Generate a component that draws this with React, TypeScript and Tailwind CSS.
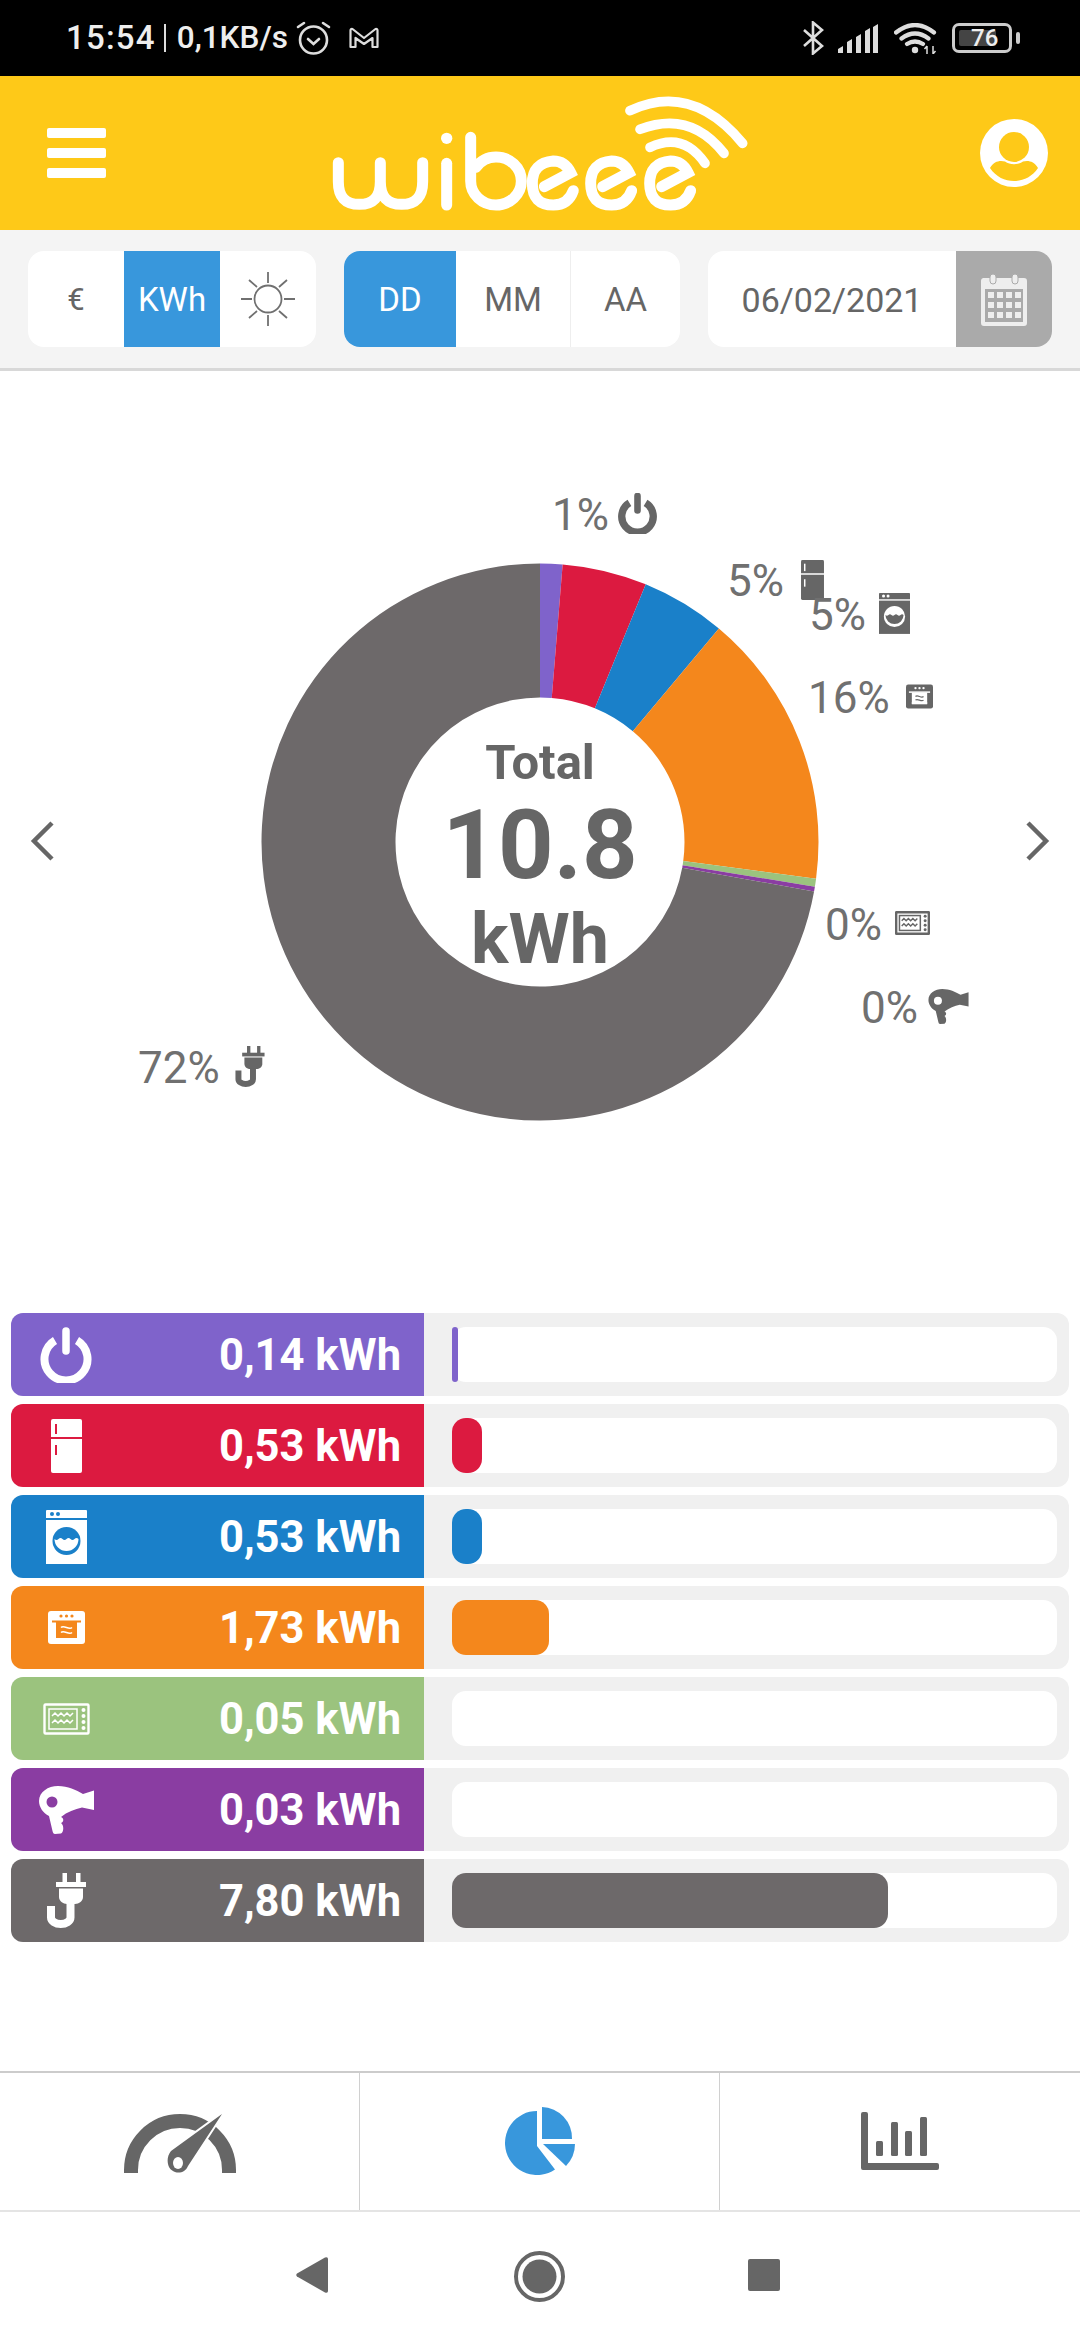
import type { FC } from "react";

type IconProps = { fg: string; bg: string; className?: string; thick?: boolean };

const PowerIcon: FC<IconProps> = ({ fg, className, thick }) => (
  <svg viewBox="0 0 52 56" className={className} fill="none" stroke={fg} strokeWidth={thick ? 10 : 8}>
    <path d="M15 13.5a21.5 21.5 0 1 0 22 0" strokeLinecap="butt" />
    <path d="M26 4v20" strokeWidth={thick ? 9 : 7.5} strokeLinecap="round" />
  </svg>
);

const FridgeIcon: FC<IconProps> = ({ fg, bg, className }) => (
  <svg viewBox="0 0 31 54" className={className}>
    <path d="M2 0h27a2 2 0 0 1 2 2v16H0V2a2 2 0 0 1 2-2z" fill={fg} />
    <path d="M0 20h31v32a2 2 0 0 1-2 2H2a2 2 0 0 1-2-2z" fill={fg} />
    <rect x="4" y="5" width="2" height="10" fill={bg} />
    <rect x="4" y="26" width="2" height="10" fill={bg} />
  </svg>
);

const WasherIcon: FC<IconProps> = ({ fg, bg, className }) => (
  <svg viewBox="0 0 41 54" className={className}>
    <path d="M1 0h39a1 1 0 0 1 1 1v7H0V1a1 1 0 0 1 1-1z" fill={fg} />
    <circle cx="6" cy="4" r="2" fill={bg} />
    <circle cx="12" cy="4" r="2" fill={bg} />
    <rect y="10" width="41" height="44" fill={fg} />
    <circle cx="20.5" cy="31" r="14" fill={bg} />
    <path d="M8.5 29q2 2 4 0t4 0t4 0t4 0t4 0t4 0a12 12 0 0 1-24 0z" fill={fg} />
  </svg>
);

const OvenIcon: FC<IconProps> = ({ fg, bg, className }) => (
  <svg viewBox="0 0 37 33" className={className}>
    <rect width="37" height="33" rx="3" fill={fg} />
    <circle cx="13" cy="5" r="1.6" fill={bg} />
    <circle cx="18.5" cy="5" r="1.6" fill={bg} />
    <circle cx="24" cy="5" r="1.6" fill={bg} />
    <rect x="4" y="9.5" width="29" height="2" fill={bg} />
    <rect x="8" y="11" width="21" height="16" fill={bg} />
    <path d="M13 16.5q1.5-1.5 5.5 0t5.5 0M13 21.5q1.5-1.5 5.5 0t5.5 0" fill="none" stroke={fg} strokeWidth="1.6" />
    <rect x="8" y="24" width="21" height="3" fill={bg} />
  </svg>
);

const MicrowaveIcon: FC<IconProps> = ({ fg, className, thick }) => (
  <svg viewBox="0 0 47 32" className={className} fill="none" stroke={fg}>
    <rect x="1.5" y="1.5" width="44" height="29" rx="1" strokeWidth={thick ? 3.4 : 2.4} />
    <rect x="6" y="6" width="28" height="20" strokeWidth={thick ? 2 : 1.5} />
    <path d="M9 13l3-3 3 3 3-3 3 3 3-3 3 3 3-3 M9 20l3-3 3 3 3-3 3 3 3-3 3 3 3-3" strokeWidth={thick ? 2 : 1.5} />
    <g fill={fg} stroke="none">
      <circle cx="40.5" cy="7" r="2" />
      <circle cx="40.5" cy="13" r="2" />
      <circle cx="40.5" cy="19" r="2" />
      <circle cx="40.5" cy="25" r="2" />
    </g>
  </svg>
);

const DryerIcon: FC<IconProps> = ({ fg, bg, className }) => (
  <svg viewBox="0 0 55 48" className={className}>
    <path
      d="M19 0C29 0 37 4 44 8L55 4.5V24L43 21.5C36 23 28 26 22 31C25 32 25 36 22 37C25 39 25 46 22 47.5L16 48C14.5 48 14 47 13.5 45L10 30C4 27 0 21 0 15C0 6 9 0 19 0Z"
      fill={fg}
    />
    <circle cx="13" cy="16" r="5.5" fill={bg} />
  </svg>
);

const PlugIcon: FC<IconProps> = ({ fg, className }) => (
  <svg viewBox="0 0 39 55" className={className}>
    <rect x="15.5" width="4.5" height="10" fill={fg} />
    <rect x="29" width="4.5" height="10" fill={fg} />
    <rect x="9" y="9" width="30" height="5" fill={fg} />
    <path d="M12 15.5H36V24C36 28 32 31 28 31H20C16 31 12 28 12 24Z" fill={fg} />
    <path d="M23.5 30V44.5a9.75 6.5 0 0 1-19.5 0V33" fill="none" stroke={fg} strokeWidth="8" />
  </svg>
);

const GREY = "#666666";
const WHITE = "#ffffff";

const segments = [
  { value: 0.14, color: "#7f63cb" },
  { value: 0.53, color: "#dc1a40" },
  { value: 0.53, color: "#1a80c9" },
  { value: 1.73, color: "#f4871c" },
  { value: 0.05, color: "#9bc37e" },
  { value: 0.03, color: "#8a3da2" },
  { value: 7.8, color: "#6d696a" },
];

function Donut() {
  const total = segments.reduce((sum, s) => sum + s.value, 0);
  const cx = 279;
  const cy = 279;
  const R = 278.5;
  const r = 144.5;
  let acc = 0;
  const point = (a: number, rad: number) =>
    `${cx + rad * Math.sin(a)} ${cy - rad * Math.cos(a)}`;

  return (
    <svg viewBox="0 0 558 558" className="block w-full h-full">
      {segments.map((s) => {
        const start = (acc / total) * Math.PI * 2;
        acc += s.value;
        const end = (acc / total) * Math.PI * 2;
        const large = end - start > Math.PI ? 1 : 0;
        const d = `M${point(start, R)}A${R} ${R} 0 ${large} 1 ${point(end, R)}L${point(end, r)}A${r} ${r} 0 ${large} 0 ${point(start, r)}Z`;
        return <path key={s.color} d={d} fill={s.color} />;
      })}
    </svg>
  );
}

const chartLabels = [
  { text: "1%", pos: "left-[552px] top-[118px]", Icon: PowerIcon, icon: "left-[618px] top-[122px] w-[39px] h-[41px]" },
  { text: "5%", pos: "left-[727px] top-[184px]", Icon: FridgeIcon, icon: "left-[801px] top-[189px] w-[23px] h-[40px]" },
  { text: "5%", pos: "left-[809px] top-[218px]", Icon: WasherIcon, icon: "left-[879px] top-[222px] w-[31px] h-[41px]" },
  { text: "16%", pos: "left-[808px] top-[301px]", Icon: OvenIcon, icon: "left-[906px] top-[313px] w-[27px] h-[25px]" },
  { text: "0%", pos: "left-[825px] top-[528px]", Icon: MicrowaveIcon, icon: "left-[895px] top-[540px] w-[35px] h-[24px]" },
  { text: "0%", pos: "left-[861px] top-[611px]", Icon: DryerIcon, icon: "left-[928px] top-[618px] w-[41px] h-[35px]" },
  { text: "72%", pos: "left-[138px] top-[671px]", Icon: PlugIcon, icon: "left-[235px] top-[675px] w-[30px] h-[41px]" },
];

const rows = [
  { kwh: "0,14 kWh", bg: "#7f63cb", panel: "bg-[#7f63cb]", bar: "w-[6px]", Icon: PowerIcon, icon: "w-[52px] h-[56px]" },
  { kwh: "0,53 kWh", bg: "#dc1a40", panel: "bg-[#dc1a40]", bar: "w-[30px]", Icon: FridgeIcon, icon: "w-[31px] h-[54px]" },
  { kwh: "0,53 kWh", bg: "#1a80c9", panel: "bg-[#1a80c9]", bar: "w-[30px]", Icon: WasherIcon, icon: "w-[41px] h-[54px]" },
  { kwh: "1,73 kWh", bg: "#f4871c", panel: "bg-[#f4871c]", bar: "w-[97px]", Icon: OvenIcon, icon: "w-[37px] h-[33px]" },
  { kwh: "0,05 kWh", bg: "#9bc37e", panel: "bg-[#9bc37e]", bar: "w-0", Icon: MicrowaveIcon, icon: "w-[47px] h-[32px]" },
  { kwh: "0,03 kWh", bg: "#8a3da2", panel: "bg-[#8a3da2]", bar: "w-0", Icon: DryerIcon, icon: "w-[55px] h-[48px]" },
  { kwh: "7,80 kWh", bg: "#6d696a", panel: "bg-[#6d696a]", bar: "w-[436px]", Icon: PlugIcon, icon: "w-[39px] h-[55px]" },
];

function StatusBar() {
  return (
    <div className="h-[76px] bg-black flex items-center pl-[66px] pr-[60px] text-[#eeeeee] shrink-0">
      <span className="text-[33px] font-medium tracking-[1.2px]">15:54</span>
      <div className="w-[2px] h-[28px] bg-[#dddddd] ml-[8px] mr-[11px]" />
      <span className="text-[31.5px] font-medium">0,1KB/s</span>
      <svg viewBox="0 0 35 34" className="w-[35px] h-[34px] ml-[8px]" fill="none" stroke="#dddddd" strokeWidth="2.6">
        <circle cx="17.5" cy="19" r="13.5" />
        <path d="M12 18l5.5 5 5.500-5M2 6l6-4M33 6l-6-4" strokeLinecap="round" />
      </svg>
      <svg viewBox="0 0 30 22" className="w-[30px] h-[22px] ml-[18px]" fill="none" stroke="#dddddd" strokeWidth="2.2">
        <path d="M1.5 20V3.5q0-2 2-1.5L15 11 26.5 2q2-.5 2 1.5V20h-5V11L15 17 6.5 11V20z" strokeLinejoin="round" />
      </svg>
      <div className="ml-auto flex items-center">
        <svg viewBox="0 0 22 34" className="w-[22px] h-[34px]" fill="none" stroke="#dddddd" strokeWidth="2.6">
          <path d="M2 9l18 16-9 7.5V1.5l9 7.5L2 25" />
        </svg>
        <svg viewBox="0 0 40 29" className="w-[40px] h-[29px] ml-[14px]" fill="#dddddd">
          <path d="M0 29v-4l5-3v7zM9 29V18l5-3v14zM18 29V13l5-3v19zM27 29V7l5-3v25zM35 29V3l5-3v29z" />
        </svg>
        <svg viewBox="0 0 46 31" className="w-[46px] h-[31px] ml-[16px] mr-[-2px]" fill="none" stroke="#dddddd">
          <path d="M2 9.5q19-15 38 0M7.5 15.5q13.5-10 27 0M13 21q8-5 16 0" strokeWidth="4.2" strokeLinecap="round" />
          <circle cx="21" cy="27" r="3.2" fill="#dddddd" stroke="none" />
          <path d="M33 23v8M33 23l-2.5 3M39 23v8M39 31l2.5-3" strokeWidth="1.5" />
        </svg>
        <div className="relative w-[60px] h-[30px] ml-[14px] rounded-[7px] border-[3px] border-[#cccccc] flex items-center">
          <div className="absolute left-[4px] top-[4px] bottom-[4px] w-[37px] bg-[#444444] rounded-[2px]" />
          <span className="relative ml-[16px] text-[24px] leading-none font-medium text-[#eeeeee]">76</span>
        </div>
        <div className="w-[4px] h-[12px] bg-[#cccccc] rounded-[2px] ml-[4px]" />
      </div>
    </div>
  );
}

function Header() {
  return (
    <header className="h-[154px] bg-[#fec918] flex items-center justify-between pl-[47px] pr-[32px] shrink-0 relative">
      <div className="flex flex-col gap-[10px]">
        <div className="w-[59px] h-[10px] bg-white rounded-[2px]" />
        <div className="w-[59px] h-[10px] bg-white rounded-[2px]" />
        <div className="w-[59px] h-[10px] bg-white rounded-[2px]" />
      </div>
      <svg
        viewBox="0 0 1440 450"
        className="absolute left-[300px] top-[4px] w-[480px] h-[150px]"
        fill="none"
        stroke="white"
        strokeWidth="33"
        strokeLinecap="round"
      >
        <path d="M115 248V305Q115 373 178 373Q241 373 241 305V248M241 305Q241 373 305 373Q368 373 368 305V248" />
        <circle cx="440" cy="175" r="17" fill="white" stroke="none" />
        <path d="M440 250V375" />
        <path d="M512 172V303A76 72 0 1 0 588 231Q550 231 528 262" />
        <path d="M733 320L812 278Q795 243 760 243Q697 248 697 310Q697 375 760 375Q805 375 820 332" />
        <path d="M908 320L987 278Q970 243 935 243Q872 248 872 310Q872 375 935 375Q980 375 995 332" />
        <path d="M1085 320L1164 278Q1147 243 1112 243Q1049 248 1049 310Q1049 375 1112 375Q1157 375 1172 332" />
        <path d="M990 92Q1175 5 1328 190" strokeWidth="29" />
        <path d="M1020 148Q1170 90 1272 220" strokeWidth="29" />
        <path d="M1050 202Q1150 155 1215 250" strokeWidth="29" />
      </svg>
      <svg viewBox="0 0 68 68" className="w-[68px] h-[68px]">
        <circle cx="34" cy="34" r="34" fill="white" />
        <circle cx="34" cy="28" r="15" fill="#fec918" />
        <path d="M10 49C14 42 20 41 25 42.5C30 46 38 46 43 42.5C48 41 54 42 58 49C52 58 43 62 34 62C25 62 16 58 10 49Z" fill="#fec918" />
      </svg>
    </header>
  );
}

function Toolbar() {
  return (
    <div className="h-[141px] bg-[#f4f4f4] border-b-[3px] border-[#d8d8d8] flex items-center justify-between px-[28px] pb-[1px] shrink-0 text-[#666666] text-[33px]">
      <div className="w-[288px] h-[96px] bg-white rounded-[16px] overflow-hidden flex">
        <div className="w-[96px] flex items-center justify-center pt-[3px] text-[31px]">€</div>
        <div className="w-[96px] bg-[#3897dc] text-white flex items-center justify-center pt-[3px]">KWh</div>
        <div className="w-[96px] flex items-center justify-center">
          <svg viewBox="0 0 56 56" className="w-[56px] h-[56px]" fill="none" stroke="#707070" strokeWidth="1.8">
            <circle cx="28" cy="28" r="13.5" />
            <path d="M28 1v11M28 44v11M1 28h11M44 28h11M9 9l8 7M47 9l-8 7M9 47l8-7M47 47l-8-7" />
          </svg>
        </div>
      </div>
      <div className="w-[336px] h-[96px] bg-white rounded-[16px] overflow-hidden flex">
        <div className="w-[112px] bg-[#3897dc] text-white flex items-center justify-center pt-[3px]">DD</div>
        <div className="w-[114px] flex items-center justify-center pt-[3px]">MM</div>
        <div className="w-[110px] border-l border-[#eeeeee] flex items-center justify-center pt-[3px]">AA</div>
      </div>
      <div className="w-[344px] h-[96px] bg-white rounded-[16px] overflow-hidden flex">
        <div className="w-[248px] flex items-center justify-center text-[34px] pt-[3px]">06/02/2021</div>
        <div className="w-[96px] bg-[#aaaaaa] flex items-center justify-center">
          <svg viewBox="0 0 48 54" className="w-[48px] h-[54px]">
            <path d="M3 6h41a3 3 0 0 1 3 3v42a3 3 0 0 1-3 3H4a3 3 0 0 1-3-3V9a3 3 0 0 1 2-3z" fill="#eeeeee" />
            <rect x="5" y="17" width="38" height="33" fill="#aaaaaa" />
            <rect x="10" y="2" width="6" height="10" rx="3" fill="#eeeeee" stroke="#aaaaaa" />
            <rect x="32" y="2" width="6" height="10" rx="3" fill="#eeeeee" stroke="#aaaaaa" />
            <g fill="#eeeeee">
              <rect x="8" y="20" width="6" height="6" /><rect x="17" y="20" width="6" height="6" /><rect x="26" y="20" width="6" height="6" /><rect x="35" y="20" width="6" height="6" />
              <rect x="8" y="30" width="6" height="6" /><rect x="17" y="30" width="6" height="6" /><rect x="26" y="30" width="6" height="6" /><rect x="35" y="30" width="6" height="6" />
              <rect x="8" y="40" width="6" height="6" /><rect x="17" y="40" width="6" height="6" /><rect x="26" y="40" width="6" height="6" /><rect x="35" y="40" width="6" height="6" />
            </g>
          </svg>
        </div>
      </div>
    </div>
  );
}

function Chart() {
  return (
    <section className="relative h-[942px] shrink-0 text-[#666666]">
      <div className="absolute left-[261px] top-[192px] w-[558px] h-[558px]">
        <Donut />
      </div>
      <div className="absolute left-[261px] top-[192px] w-[558px] h-[558px] flex flex-col items-center justify-center pt-[30px] font-bold">
        <span className="text-[49px] leading-[60px]">Total</span>
        <span className="text-[97px] leading-[104px]">10.8</span>
        <span className="text-[70px] leading-[84px]">kWh</span>
      </div>
      <svg viewBox="0 0 24 40" className="absolute left-[30px] top-[450px] w-[24px] h-[40px]" fill="none" stroke="#666666" strokeWidth="4.5">
        <path d="M22 2L4 20l18 18" />
      </svg>
      <svg viewBox="0 0 24 40" className="absolute left-[1026px] top-[450px] w-[24px] h-[40px]" fill="none" stroke="#666666" strokeWidth="4.5">
        <path d="M2 2l18 18L2 38" />
      </svg>
      {chartLabels.map((l, i) => (
        <div key={i}>
          <l.Icon fg={GREY} bg={WHITE} thick className={`absolute ${l.icon}`} />
          <span className={`absolute ${l.pos} text-[44px] leading-[52px] font-normal text-[#707070]`}>{l.text}</span>
        </div>
      ))}
    </section>
  );
}

function Rows() {
  return (
    <section className="flex flex-col gap-[8px] pl-[11px] pr-[11px] shrink-0">
      {rows.map((r, i) => (
        <div key={i} className="flex h-[83px] rounded-l-[12px] rounded-r-[12px] overflow-hidden bg-[#f0f0f0]">
          <div className={`w-[413px] ${r.panel} flex items-center pr-[23px]`}>
            <div className="w-[110px] flex justify-center">
              <r.Icon fg={WHITE} bg={r.bg} className={r.icon} />
            </div>
            <span className="ml-auto pt-[2px] text-[43.5px] font-bold text-white">{r.kwh}</span>
          </div>
          <div className="flex-1 pl-[28px] pr-[12px] py-[14px]">
            <div className="h-[55px] bg-white rounded-[14px]">
              <div className={`h-full ${r.bar} ${r.panel} rounded-[14px]`} />
            </div>
          </div>
        </div>
      ))}
    </section>
  );
}

function BottomNav() {
  return (
    <nav className="h-[141px] border-t-[2px] border-b-[2px] border-t-[#cccccc] border-b-[#e4e4e4] grid grid-cols-3 shrink-0">
      <div className="border-r border-[#d0d0d0] flex items-center justify-center pt-[4px]">
        <svg viewBox="0 0 112 59" className="w-[112px] h-[59px]">
          <path d="M7 59V56a49 49 0 0 1 98 0v3" fill="none" stroke="#666666" strokeWidth="14" />
          <path d="M98 0L64 52C60 62 46 60 44 50C43 45 44 41 47 37Z" fill="#666666" stroke="white" strokeWidth="4" paintOrder="stroke" />
          <ellipse cx="54" cy="49" rx="5" ry="6" fill="white" />
        </svg>
      </div>
      <div className="border-r border-[#d0d0d0] flex items-center justify-center">
        <svg viewBox="0 0 70 68" className="w-[70px] h-[68px]" fill="#3897dc">
          <path d="M32 4V39L50 62.46A32 32 0 1 1 32 4Z" />
          <path d="M37 0A31 31 0 0 1 67 32H37Z" />
          <path d="M38 37H70A32 32 0 0 1 61 59Z" />
        </svg>
      </div>
      <div className="flex items-center justify-center">
        <svg viewBox="0 0 78 58" className="w-[78px] h-[58px]" fill="#666666">
          <path d="M2 0h3a2 2 0 0 1 2 2v49h69a2 2 0 0 1 2 2v3a2 2 0 0 1-2 2H2a2 2 0 0 1-2-2V2a2 2 0 0 1 2-2z" />
          <rect x="15" y="29" width="7" height="15" rx="1.5" />
          <rect x="30" y="10" width="7" height="34" rx="1.5" />
          <rect x="44" y="19" width="7" height="25" rx="1.5" />
          <rect x="59" y="5" width="7" height="39" rx="1.5" />
        </svg>
      </div>
    </nav>
  );
}

function AndroidBar() {
  return (
    <div className="h-[128px] flex-1 bg-white relative">
      <svg viewBox="0 0 32 36" className="absolute left-[296px] top-[45px] w-[32px] h-[36px]" fill="#666666">
        <path d="M1 16.5L29 .5q3-1 3 1.5v32q0 2.5-3 1.5L1 19.5q-1.5-1.5 0-3z" />
      </svg>
      <svg viewBox="0 0 51 51" className="absolute left-[514px] top-[39px] w-[51px] h-[51px]">
        <circle cx="25.5" cy="25.5" r="23.5" fill="none" stroke="#666666" strokeWidth="4" />
        <circle cx="25.5" cy="25.5" r="17" fill="#666666" />
      </svg>
      <div className="absolute left-[748px] top-[47px] w-[32px] h-[32px] bg-[#666666] rounded-[2px]" />
    </div>
  );
}

export default function App() {
  return (
    <div className="w-[1080px] h-[2340px] bg-white flex flex-col overflow-hidden font-['Roboto',sans-serif]">
      <StatusBar />
      <Header />
      <Toolbar />
      <Chart />
      <Rows />
      <div className="flex-1" />
      <BottomNav />
      <AndroidBar />
    </div>
  );
}
